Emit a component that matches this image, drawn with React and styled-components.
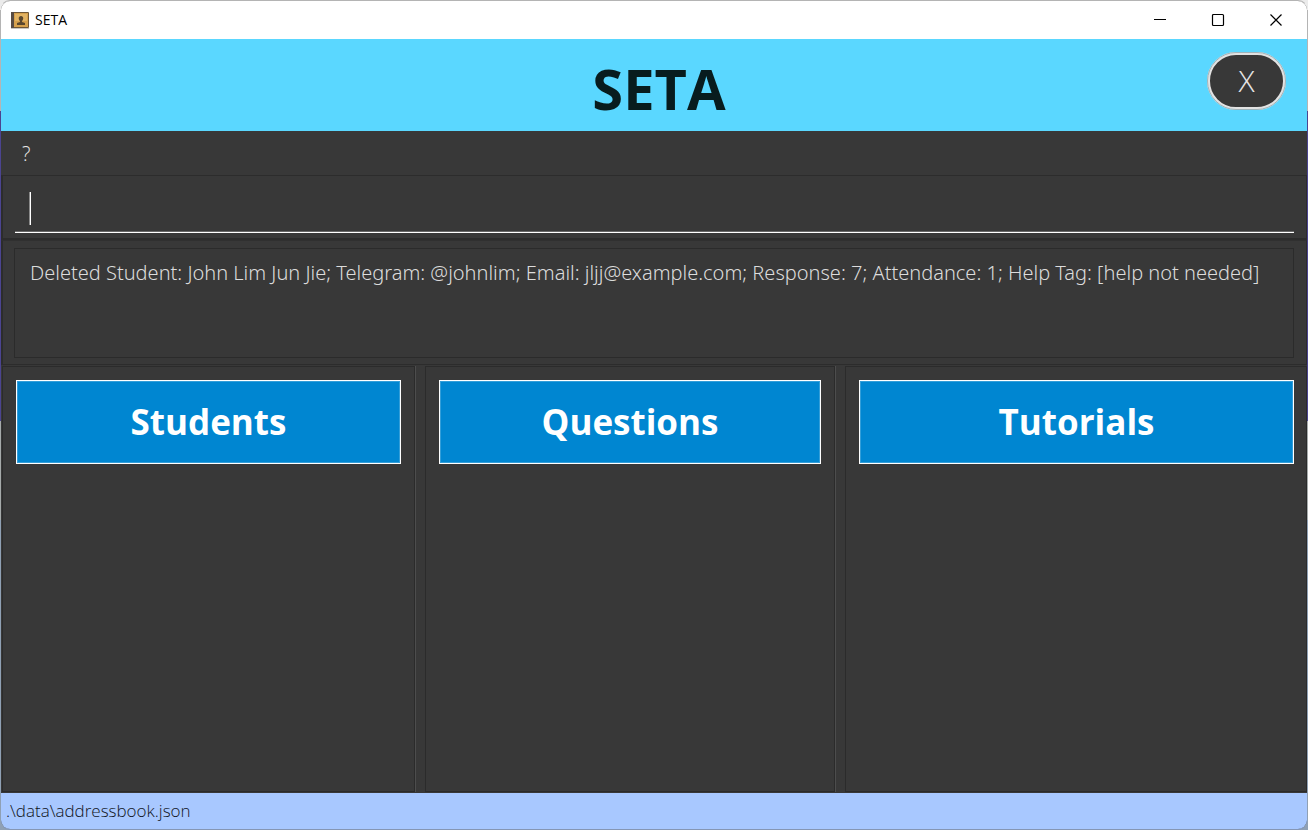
import React from "react";
import styled, { createGlobalStyle } from "styled-components";

const GlobalStyle = createGlobalStyle`
  *, *::before, *::after { box-sizing: border-box; }
  html, body, #root { height: 100%; }
  body {
    margin: 0;
    background: linear-gradient(#ebebeb 0 10px, #b4b4b4 10px 111px, #4b4490 111px 421px, #a5aaaa 421px 520px, #8fa0b4 520px);
    font-family: "Open Sans", "Noto Sans", sans-serif;
  }
`;

const Window = styled.div`
  min-height: 100%;
  display: flex;
  flex-direction: column;
  overflow: hidden;
  border: 1px solid transparent;
  border-top-color: #b4b4b4;
  border-bottom-color: #8596b4;
  border-radius: 10px;
  background: #383838 padding-box;
`;

const TitleBar = styled.div`
  display: flex;
  align-items: center;
  height: 38px;
  padding: 0 2px 0 9px;
  background: #ffffff;
`;

const WindowTitle = styled.span`
  flex: 1;
  margin-left: 6px;
  color: #000000;
  font-size: 14px;
  line-height: 20px;
`;

const CaptionButton = styled.button`
  display: flex;
  align-items: center;
  justify-content: center;
  width: 58px;
  height: 38px;
  padding: 0;
  border: 0;
  background: transparent;
`;

const Header = styled.header`
  display: grid;
  grid-template-columns: 100px 1fr 100px;
  align-items: center;
  height: 92px;
  background: #5ad7ff;
`;

const AppTitle = styled.h1`
  grid-column: 2;
  margin: 6px 0 0 10px;
  color: #081c1e;
  font-size: 56px;
  font-weight: 700;
  line-height: 76px;
  text-align: center;
`;

const ExitButton = styled.button`
  width: 79px;
  height: 58px;
  margin-bottom: 8px;
  padding: 0;
  border: 3px solid #e2e2e2;
  border-radius: 29px;
  outline: 1px solid #9fb4bb;
  outline-offset: -1px;
  background: #383838;
  color: #e6e6e6;
  font: 300 30px/44px "Open Sans", "Noto Sans", sans-serif;
`;

const MenuBar = styled.nav`
  display: flex;
  height: 44px;
  padding-left: 13px;
`;

const MenuButton = styled.button`
  padding: 1px 8px 0;
  border: 0;
  background: transparent;
  color: #e8e8e8;
  font: 300 20px/44px "Open Sans", "Noto Sans", sans-serif;
`;

const Pane = styled.section`
  border: 2px solid #2c2c2c;
  border-top-width: 1px;
  border-right-width: 1px;
`;

const CommandPane = styled(Pane)`
  position: relative;
  height: 65px;
  padding: 8px 12px 6px;
`;

const CommandInput = styled.input`
  display: block;
  width: 100%;
  height: 49px;
  padding: 0 14px;
  border: 0;
  border-bottom: 1px solid #ffffff;
  outline: 0;
  background: transparent;
  box-shadow: inset 0 -1px #686868;
  color: #ffffff;
  caret-color: transparent;
  font: 300 20px/32px "Noto Sans", "Open Sans", sans-serif;
`;

const Caret = styled.span`
  position: absolute;
  top: 16px;
  left: 26px;
  width: 2px;
  height: 33px;
  border-left: 1px solid #8a8a8a;
  background: #ffffff;
`;

const ResultPane = styled(Pane)`
  height: 125px;
  padding: 7px 12px 5px 11px;
  border-top-color: #303030;
  border-bottom-width: 1px;
`;

const ResultText = styled.textarea`
  display: block;
  width: 100%;
  height: 110px;
  padding: 8px 4px 8px 15px;
  overflow: hidden;
  resize: none;
  border: 1px solid #2b2b2b;
  outline: 0;
  background: transparent;
  color: #dcdcdc;
  font: 300 20px/32px "Noto Sans", "Open Sans", sans-serif;
`;

const Columns = styled.main`
  display: grid;
  flex: 1;
  grid-template-columns: 413fr 10px 410fr 10px 462fr;
  padding: 1px 0 1px 1px;
`;

const Column = styled.section`
  min-width: 0;
  padding: 13px ${({ $last }) => ($last ? "12px" : "13px")} 0 13px;
  border: 1px solid #2b2b2b;
`;

const Divider = styled.div`
  border-left: 1px solid #4d4d4d;
`;

const ColumnTitle = styled.h2`
  margin: 0;
  border: 1px solid #ffffff;
  background: #0086d1;
  box-shadow: inset 0 0 0 1px #339ed9;
  color: #ffffff;
  font-size: 35px;
  font-weight: 700;
  line-height: 82px;
  text-align: center;
`;

const StatusBar = styled.footer`
  height: 36px;
  padding-left: 5px;
  background: #a8c8ff;
  color: #10141c;
  font-size: 17px;
  font-weight: 300;
  line-height: 36px;
`;

const BookIcon = () => (
  <svg width="19" height="17" viewBox="0 0 19 17" aria-hidden="true">
    <rect x="1" y="0" width="18" height="16" rx="1" fill="#6e5637" />
    <rect x="1" y="0" width="3" height="16" fill="#574b43" />
    <rect x="4" y="1" width="14" height="14" fill="#d5a04c" />
    <rect x="5" y="2" width="12" height="7" fill="#e2b363" />
    <path d="M1 16.5h18" stroke="#c9c6c1" />
    <path d="M11 4c3 0 2.600 4 1 5v1l3 1v2H7v-2l3-1V9c-1.600-1-2-5 1-5z" fill="#59472f" />
  </svg>
);

const MinimizeIcon = () => (
  <svg width="14" height="14" viewBox="0 0 14 14" aria-hidden="true">
    <path d="M1 6.500h12" stroke="#000" />
  </svg>
);

const MaximizeIcon = () => (
  <svg width="14" height="14" viewBox="0 0 14 14" aria-hidden="true">
    <rect x="1.500" y="1.500" width="11" height="11" rx="1" fill="none" stroke="#000" strokeWidth="1.200" />
  </svg>
);

const CloseIcon = () => (
  <svg width="14" height="14" viewBox="0 0 14 14" aria-hidden="true">
    <path d="M1.500 1.500l11 11M12.500 1.500l-11 11" stroke="#000" strokeWidth="1.200" />
  </svg>
);

const columns = ["Students", "Questions", "Tutorials"];

const message =
  "Deleted Student: John Lim Jun Jie; Telegram: @johnlim; Email: jljj@example.com; Response: 7; Attendance: 1; Help Tag: [help not needed]";

export default function App() {
  return (
    <>
      <GlobalStyle />
      <Window>
        <TitleBar>
          <BookIcon />
          <WindowTitle>SETA</WindowTitle>
          <CaptionButton aria-label="Minimize"><MinimizeIcon /></CaptionButton>
          <CaptionButton aria-label="Maximize"><MaximizeIcon /></CaptionButton>
          <CaptionButton aria-label="Close"><CloseIcon /></CaptionButton>
        </TitleBar>
        <Header>
          <AppTitle>SETA</AppTitle>
          <ExitButton>X</ExitButton>
        </Header>
        <MenuBar>
          <MenuButton>?</MenuButton>
        </MenuBar>
        <CommandPane>
          <CommandInput aria-label="Command" />
          <Caret />
        </CommandPane>
        <ResultPane>
          <ResultText aria-label="Result" readOnly value={message} />
        </ResultPane>
        <Columns>
          {columns.map((title, index) => {
            const last = index === columns.length - 1;
            return (
              <React.Fragment key={title}>
                <Column $last={last}>
                  <ColumnTitle>{title}</ColumnTitle>
                </Column>
                {!last && <Divider />}
              </React.Fragment>
            );
          })}
        </Columns>
        <StatusBar>.\data\addressbook.json</StatusBar>
      </Window>
    </>
  );
}
